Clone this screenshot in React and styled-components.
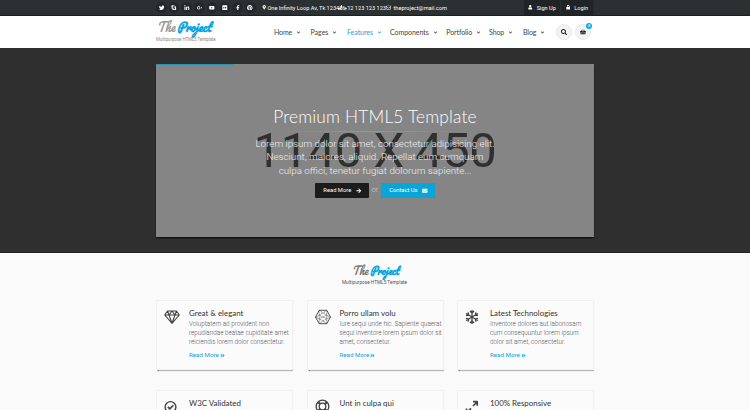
import React from "react";
import styled, { createGlobalStyle } from "styled-components";
import {
  FaTwitter, FaSkype, FaLinkedinIn, FaGooglePlusG, FaYoutube, FaFlickr,
  FaFacebookF, FaPinterest, FaMapMarkerAlt, FaPhone, FaRegEnvelope, FaUser,
  FaLock, FaSearch, FaShoppingBasket, FaAngleDown, FaArrowRight, FaEnvelope,
  FaAngleDoubleRight,
} from "react-icons/fa";

const Global = createGlobalStyle`
  * { box-sizing: border-box; }
  body { margin: 0; width: 750px; height: 410px; overflow: hidden; background: #fafafa; font-family: Roboto, sans-serif; color: #777; }
  h1, h2, h3, p { margin: 0; font-weight: 400; }
  svg { display: block; flex: none; }
`;

const Page = styled.div`
  height: 410px;
  overflow: hidden;
`;
const Container = styled.div`
  width: 438px;
  margin: 0 auto;
  display: flex;
  align-items: center;
  height: 100%;
`;
const TopBar = styled.div`
  height: 16px;
  background: #2b3033;
  border-bottom: 1px solid #1c1f21;
`;
const Socials = styled.div`
  display: flex;
  width: 106px;
  gap: 2px;
`;
const Social = styled.span`
  width: 10.7px;
  height: 11px;
  border-radius: 50%;
  background: #23282a;
  color: #fff;
  font-size: 5.6px;
  display: flex;
  align-items: center;
  justify-content: center;
`;
const Contact = styled.span`
  width: ${(p) => p.$width}px;
  display: flex;
  align-items: center;
  gap: ${(p) => p.$gap}px;
  white-space: nowrap;
  color: #fff;
  font-size: 5.6px;
  letter-spacing: ${(p) => p.$spacing || 0}px;
`;
const Account = styled.div`
  margin-left: auto;
  display: flex;
  height: 100%;
`;
const AccountLink = styled.a`
  width: ${(p) => p.$width}px;
  background: #202426;
  border-right: 1px solid #272c2e;
  color: #fff;
  display: flex;
  align-items: center;
  justify-content: center;
  gap: 4px;
  font-size: 5.6px;
`;

const Header = styled.header`
  height: 32px;
  background: #fff;
`;
const LogoBox = styled.div`
  width: 121px;
  padding-bottom: 1px;
`;
const Nav = styled.nav`
  display: grid;
  grid-template-columns: 36.5px 36.5px 43px 56.3px 42.7px 34px 33px;
`;
const NavLink = styled.a`
  display: flex;
  align-items: center;
  gap: 4px;
  font: 400 7px Lato, sans-serif;
  letter-spacing: ${(p) => p.$spacing}px;
  color: ${(p) => (p.$active ? "#19a3d8" : "#444")};
`;
const RoundButton = styled.button`
  position: relative;
  width: 16px;
  height: 16px;
  flex: none;
  margin-right: 3px;
  padding: 0;
  border: 1px solid #e9e9e9;
  border-radius: 50%;
  background: #f3f3f3;
  color: #111;
  font-size: 6px;
  display: flex;
  align-items: center;
  justify-content: center;
`;
const Badge = styled.span`
  position: absolute;
  top: -2px;
  right: -2px;
  width: 6px;
  height: 6px;
  border-radius: 50%;
  background: #09afdf;
  color: #fff;
  font: 4px/6px Roboto, sans-serif;
  text-align: center;
`;

const Banner = styled.section`
  height: 205px;
  padding-top: 16px;
  background: #2f2f2f;
  border-bottom: 1px solid #252525;
`;
const Slide = styled.div`
  position: relative;
  width: 438px;
  height: 173px;
  margin: 0 auto;
  padding-top: 43px;
  background: #858585;
  box-shadow: 0 1.5px 1.5px #101010;
  display: flex;
  flex-direction: column;
  align-items: center;
`;
const Progress = styled.div`
  position: absolute;
  left: 0;
  top: 0;
  width: 77px;
  height: 1px;
  background: #2c91b8;
`;
const Placeholder = styled.div`
  position: absolute;
  inset: 58px 0 auto;
  text-align: center;
  font-size: 49px;
  line-height: 58px;
  letter-spacing: -0.5px;
  color: #303030;
`;
const SlideTitle = styled.h1`
  position: relative;
  font: 300 17.3px/20px Lato, sans-serif;
  letter-spacing: 0.2px;
  color: #fff;
`;
const Divider = styled.div`
  width: 190px;
  height: 1px;
  margin-top: 4px;
  background: linear-gradient(90deg, #858585, #979797, #858585);
`;
const SlideText = styled.p`
  position: relative;
  margin-top: 5px;
  font-weight: 300;
  font-size: 9.8px;
  line-height: 13.4px;
  text-align: center;
  white-space: nowrap;
  color: #f0f0f0;
`;
const Actions = styled.div`
  position: relative;
  margin-top: 6px;
  display: flex;
  align-items: center;
  gap: 3px;
  color: #ddd;
  font-weight: 300;
  font-size: 7px;
`;
const Button = styled.a`
  width: 53.5px;
  height: 14.5px;
  border-radius: 1px;
  background: ${(p) => (p.$primary ? "#09a5d9" : "#1c1c1c")};
  color: #fff;
  font-weight: 400;
  font-size: 5.8px;
  display: flex;
  align-items: center;
  justify-content: space-between;
  padding: 0 7px 0 8px;
`;

const Intro = styled.div`
  height: 47px;
  padding-top: 10px;
  display: flex;
  justify-content: center;
`;
const Cards = styled.div`
  width: 438px;
  margin: 0 auto;
  display: grid;
  grid-template-columns: repeat(3, 137px);
  column-gap: 13.5px;
  row-gap: 20px;
`;
const Card = styled.article`
  height: 70px;
  border: 1px solid #f1f1f1;
  background: #fbfbfb;
  box-shadow: 0 1.5px 1px -0.5px #777;
  padding: 7px 0 0 7px;
  display: grid;
  grid-template-columns: 25px 1fr;
`;
const CardIcon = styled.div`
  padding-top: 1px;
  color: #444;
`;
const CardTitle = styled.h2`
  font: 400 7.9px/10px Lato, sans-serif;
  letter-spacing: ${(p) => p.$spacing || 0}px;
  white-space: nowrap;
  color: #333;
`;
const CardText = styled.p`
  margin-top: 2px;
  font-weight: 300;
  font-size: 6.35px;
  line-height: 8.75px;
  white-space: nowrap;
  color: #555;
`;
const More = styled.a`
  margin-top: 5px;
  display: flex;
  align-items: center;
  gap: 1px;
  font-size: 6.2px;
  line-height: 8px;
  color: #09a5d9;
`;

const Logo = ({ soft }) => (
  <svg width={soft ? 68 : 61} height="23" viewBox={soft ? "0 0 68 23" : "0 0 61 23"}>
    <g fontFamily="Pacifico, 'Lobster', 'Brush Script MT', Lato, cursive" fontStyle="italic" fontSize="13">
      <text x={soft ? 11 : 1} y="12" fill={soft ? "#777" : "#999"} fontSize={soft ? 11.5 : 13} textLength={soft ? 16 : 18} lengthAdjust="spacingAndGlyphs">The</text>
      <text x={soft ? 29 : 21} y="12" fill="#09a5df" fontWeight="900" fontSize={soft ? 11 : 12.5} textLength={soft ? 29 : 34} lengthAdjust="spacingAndGlyphs">Project</text>
    </g>
    <text x={soft ? 1 : 0} y={soft ? 21 : 20.5} fill={soft ? "#555" : "#888"} fontFamily="Roboto, sans-serif" fontSize={soft ? 5.3 : 5} textLength={soft ? 65 : 59.5} lengthAdjust="spacingAndGlyphs">Multipurpose HTML5 Template</text>
  </svg>
);

const Line = ({ children, width = 1.1 }) => (
  <svg width="16" height="16" viewBox="0 0 16 16" fill="none" stroke="currentColor" strokeWidth={width} strokeLinejoin="round">
    {children}
  </svg>
);
const icons = {
  diamond: <Line><path d="M3.5 2h9L15.3 6 8 14.3.7 6zM.7 6h14.6M3.5 2 5 6l3 8.3L11 6l1.5-4M5 6l3-4 3 4" /></Line>,
  hexagon: (
    <Line width={0.6}>
      <path strokeWidth="0.9" d="M4.2 1.3h7.6l3.7 6.7-3.7 6.7H4.2L.5 8z" />
      <path d="M4.2 1.3 8 4l3.8-2.7M.5 8l3.7-1.8L4.2 1.3M.5 8l3.7 1.8v4.9L8 12l3.8 2.7V9.8L15.5 8l-3.7-1.8V1.3M4.2 6.2 8 4l3.8 2.2L8 8zM4.2 9.8 8 8l3.8 1.8L8 12zM4.2 6.2v3.6M11.8 6.2v3.6" strokeDasharray="1.4 .5" />
    </Line>
  ),
  snow: (
    <Line width={1.3}>
      <path d="M7 1v14M1 4.5l12 7M1 11.5l12-7M5 2l2 2 2-2M5 14l2-2 2 2M1 6.7l2.7-.7L3 3.3M13 9.3l-2.7.7.7 2.7M1 9.3l2.7.7-.7 2.7M13 6.7 10.3 6l.7-2.7" />
    </Line>
  ),
  check: <Line width={1.4}><circle cx="6.5" cy="8" r="5.4" /><path d="m3.8 7.9 2 2 3.6-3.7" strokeWidth="1.6" /></Line>,
  ring: (
    <Line width={1.3}>
      <circle cx="7.5" cy="7.5" r="6.3" /><circle cx="7.5" cy="7.5" r="3.3" />
      <path strokeWidth="2" d="m3 3 2.3 2.3M12 3 9.7 5.3M3 12l2.3-2.3M12 12 9.7 9.7" />
    </Line>
  ),
  expand: <Line width={1.7}><path d="M8 2.7h4.2v4M12 3 8 7M6 9.3l-4 4M1.5 9.5v4h4" /></Line>,
};

const nav = [
  ["Home", -0.15], ["Pages", 0], ["Features", -0.05], ["Components", -0.05],
  ["Portfolio", -0.1], ["Shop", -0.1], ["Blog", -0.1],
];
const socials = [FaTwitter, FaSkype, FaLinkedinIn, FaGooglePlusG, FaYoutube, FaFlickr, FaFacebookF, FaPinterest];
const cards = [
  ["diamond", "Great & elegant", ["Voluptatem ad provident non", "repudiandae beatae cupiditate amet", "reiciendis lorem dolor consectetur."]],
  ["hexagon", "Porro ullam volu", ["Iure sequi unde hic. Sapiente quaerat", "sequi inventore lorem ipsum dolor sit", "amet, consectetur."]],
  ["snow", "Latest Technologies", ["Inventore dolores aut laboriosam", "cum consequuntur lorem ipsum", "dolor sit amet, consectetur."]],
  ["check", "W3C Validated", []],
  ["ring", "Unt in culpa qui", []],
  ["expand", "100% Responsive", []],
];
const lines = (list) => list.map((t) => <React.Fragment key={t}>{t}<br /></React.Fragment>);

export default function App() {
  return (
    <Page>
      <Global />
      <TopBar>
        <Container>
          <Socials>{socials.map((Icon, i) => <Social key={i}><Icon /></Social>)}</Socials>
          <Contact $width={75.5} $gap={1}><FaMapMarkerAlt size={4.5} />One Infinity Loop Av, Tk 123456</Contact>
          <Contact $width={48.5} $gap={2}><FaPhone size={4.5} />+12 123 123 123</Contact>
          <Contact $width={60} $gap={2.5}><FaRegEnvelope size={5} />theproject@mail.com</Contact>
          <Account>
            <AccountLink $width={37}><FaUser size={4.5} />Sign Up</AccountLink>
            <AccountLink $width={33}><FaLock size={4.5} />Login</AccountLink>
          </Account>
        </Container>
      </TopBar>
      <Header>
        <Container>
          <LogoBox><Logo /></LogoBox>
          <Nav>
            {nav.map(([name, spacing]) => (
              <NavLink key={name} $spacing={spacing} $active={name === "Features"}>{name}<FaAngleDown size={5} /></NavLink>
            ))}
          </Nav>
          <RoundButton><FaSearch /></RoundButton>
          <RoundButton><FaShoppingBasket /><Badge>8</Badge></RoundButton>
        </Container>
      </Header>
      <Banner>
        <Slide>
          <Progress />
          <Placeholder>1140 X 450</Placeholder>
          <SlideTitle>Premium HTML5 Template</SlideTitle>
          <Divider />
          <SlideText>{lines(["Lorem ipsum dolor sit amet, consectetur adipisicing elit.", "Nesciunt, maiores, aliquid. Repellat eum cumquam", "culpa offici, tenetur fugiat dolorum sapiente..."])}</SlideText>
          <Actions>
            <Button>Read More<FaArrowRight size={5.5} /></Button>
            or
            <Button $primary>Contact Us<FaEnvelope size={5.5} /></Button>
          </Actions>
        </Slide>
      </Banner>
      <Intro><Logo soft /></Intro>
      <Cards>
        {cards.map(([icon, title, text]) => (
          <Card key={title}>
            <CardIcon>{icons[icon]}</CardIcon>
            <div>
              <CardTitle>{title}</CardTitle>
              <CardText>{lines(text)}</CardText>
              {text.length > 0 && <More>Read More<FaAngleDoubleRight size={5} /></More>}
            </div>
          </Card>
        ))}
      </Cards>
    </Page>
  );
}
